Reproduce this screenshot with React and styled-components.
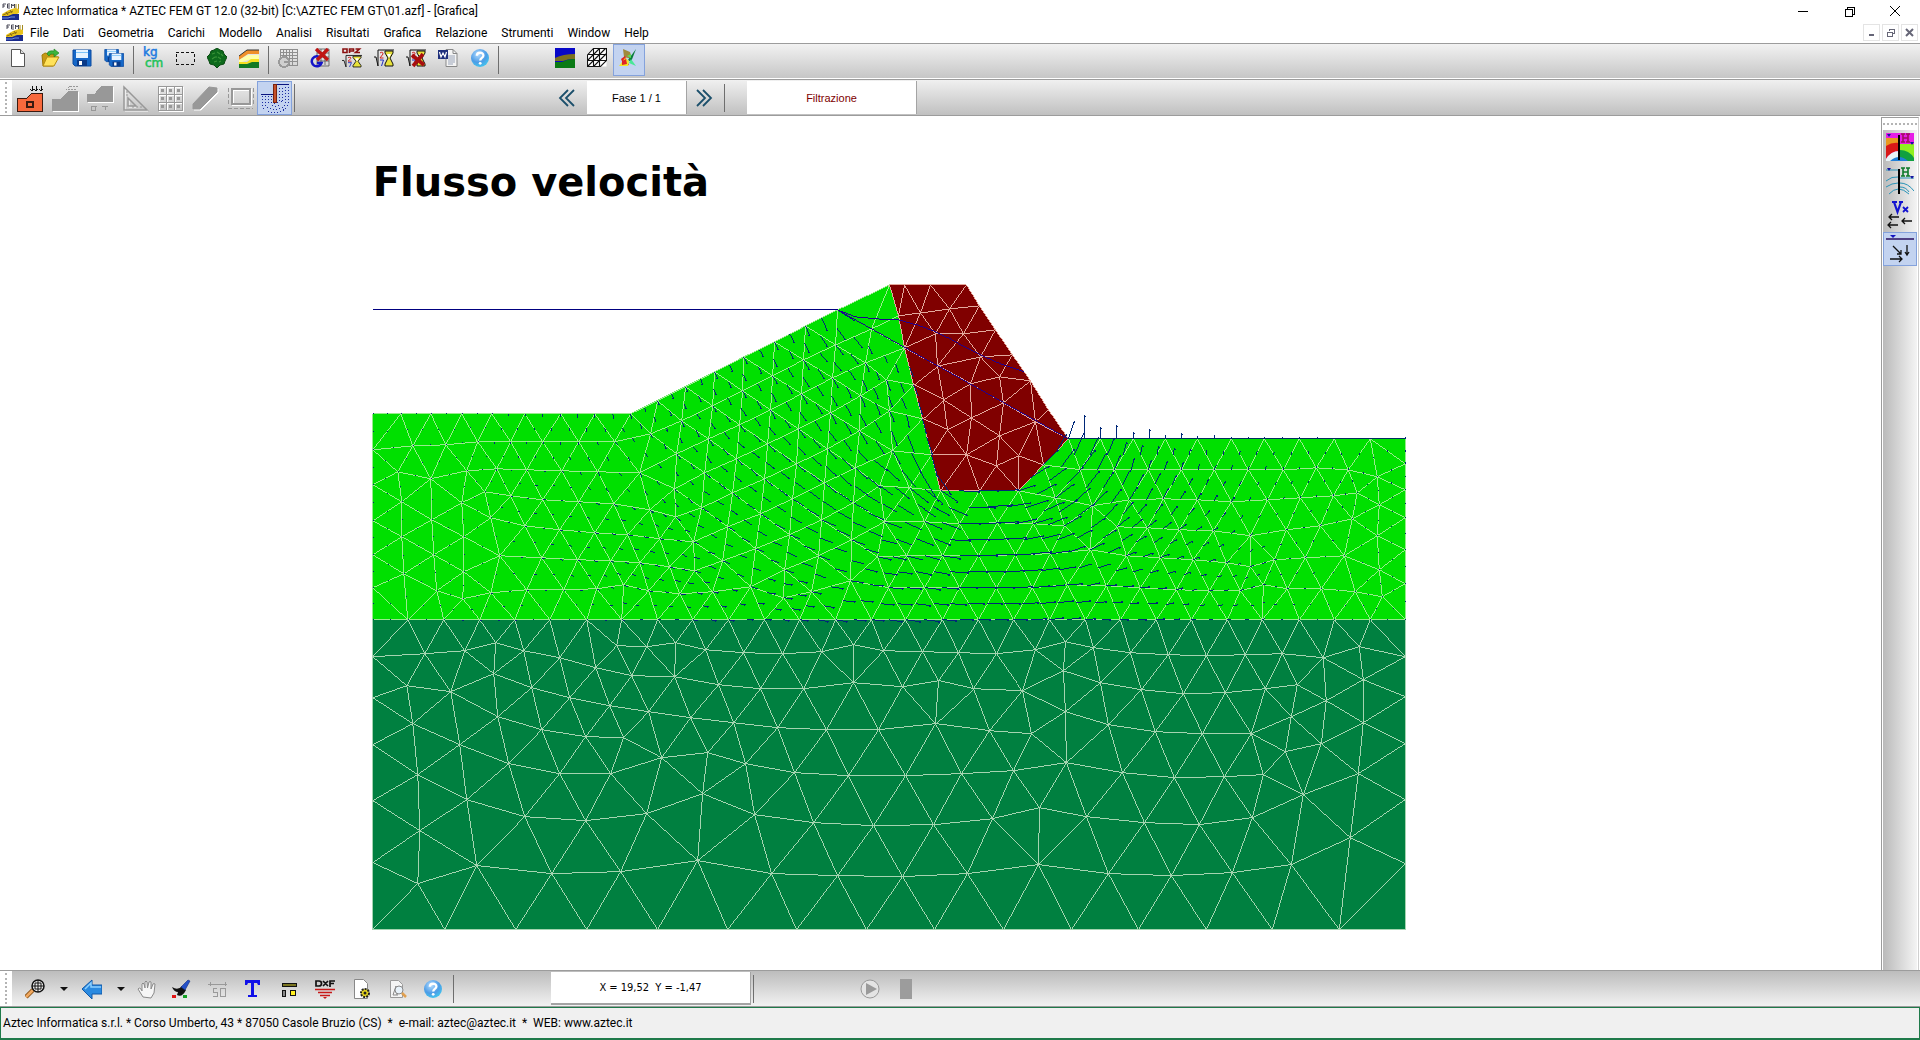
import React from "react";
import styled, { createGlobalStyle, css } from "styled-components";

/* ------------------------------------------------------------------ */
/* Page                                                                */
/* ------------------------------------------------------------------ */

const UI_FONT = 'Roboto, "Open Sans", sans-serif';

const GlobalStyle = createGlobalStyle`
  *, *::before, *::after { box-sizing: border-box; }
  html, body, #root { height: 100%; }
  body { margin: 0; background: #fff; font-family: ${UI_FONT}; font-size: 12px; color: #000; }
  button { font: inherit; color: inherit; }
`;

const Window = styled.div`
  height: 100vh;
  display: flex;
  flex-direction: column;
  background: #fff;
  overflow: hidden;
`;

const TitleBar = styled.header`
  height: 22px;
  flex: none;
  display: flex;
  align-items: center;
  gap: 4px;
  padding: 0 2px;
`;

const TitleText = styled.div`
  flex: 1;
  white-space: pre;
  font-size: 12px;
  line-height: 20px;
`;

const WindowControls = styled.div`
  display: flex;
  height: 20px;
`;

const WindowButton = styled.button`
  width: 46px;
  height: 20px;
  padding: 0;
  border: 0;
  background: none;
  display: grid;
  place-items: center;
`;

const MenuBar = styled.nav`
  height: 21px;
  flex: none;
  display: flex;
  align-items: center;
  padding: 0 2px 0 6px;
`;

const MenuList = styled.div`
  flex: 1;
  display: flex;
`;

const MenuItem = styled.button`
  border: 0;
  background: none;
  padding: 0 7px;
  line-height: 20px;
  font-size: 12px;
`;

const MdiControls = styled.div`
  display: flex;
  gap: 2px;
`;

const MdiButton = styled.button`
  width: 17px;
  height: 17px;
  padding: 0;
  border: 1px solid #e4e4e4;
  background: #fff;
  display: grid;
  place-items: center;
`;

const Tool = styled.button`
  width: ${(p) => p.$w || 32}px;
  height: ${(p) => p.$h || 32}px;
  flex: none;
  padding: 0;
  display: grid;
  place-items: center;
  background: ${(p) => (p.$on ? "#c3d3f0" : "none")};
  border: 1px solid ${(p) => (p.$on ? "#84a2dc" : "transparent")};
  svg { display: block; }
`;

const Bar = styled.div`
  flex: none;
  display: flex;
  align-items: center;
  border: solid #9c9c9c;
  border-width: 1px 0;
  ${(p) =>
    p.$kind === "main" &&
    css`
      height: 36px;
      border-bottom-color: #fff;
      padding: 0 0 2px 2px;
      background: linear-gradient(#f2f2f2, #c6c6c6);
      ${Tool} { padding-bottom: 4px; }
    `}
  ${(p) =>
    p.$kind === "phase" &&
    css`
      height: 37px;
      background: linear-gradient(#f0f0f0, #c0c0c0);
    `}
  ${(p) =>
    p.$kind === "bottom" &&
    css`
      height: 37px;
      background: linear-gradient(#bcbcbc, #f2f2f2);
    `}
`;

const Grip = styled.div`
  width: 12px;
  height: 100%;
  flex: none;
  background: #fff;
  display: flex;
  justify-content: center;
  padding: 2px 0;
  &::before {
    content: "";
    border-left: 2px dotted #b4b4b4;
  }
`;

const Group = styled.div`
  display: flex;
  align-items: center;
  height: 100%;
  ${(p) => p.$space && css`margin-left: ${p.$space}px;`}
`;

const Divider = styled.div`
  width: 1px;
  height: 28px;
  flex: none;
  margin: 0 ${(p) => p.$gap ?? 3}px;
  background: #6e6e6e;
`;

const Readout = styled.output`
  width: ${(p) => p.$w}px;
  height: 33px;
  flex: none;
  display: grid;
  place-items: center;
  background: #fff;
  border: solid #a4a4a4;
  border-width: 0 1px ${(p) => (p.$deep ? 2 : 0)}px 0;
  color: ${(p) => p.$color || "#000"};
  font: ${(p) => p.$font || '11px "Liberation Sans", sans-serif'};
  white-space: pre;
`;

const Client = styled.div`
  flex: 1;
  min-height: 0;
  display: flex;
`;

const Canvas = styled.main`
  flex: 1;
  min-width: 0;
  svg { display: block; width: 100%; height: 100%; }
`;

const SideBar = styled.aside`
  width: 38px;
  margin: 1px 1px 0 0;
  flex: none;
  border: 1px solid #9c9c9c;
  border-right-color: #d0d0d0;
  border-bottom: 0;
  padding: 0 1px;
  background: #fff;
  display: flex;
  flex-direction: column;
`;

const SideGrip = styled.div`
  height: 12px;
  flex: none;
  display: flex;
  flex-direction: column;
  justify-content: center;
  &::before {
    content: "";
    border-top: 2px dotted #b4b4b4;
  }
`;

const SideTools = styled.div`
  flex: 1;
  display: flex;
  flex-direction: column;
  background: linear-gradient(to right, #bababa, #f4f4f4);
`;

const StatusBar = styled.footer`
  height: 33px;
  flex: none;
  border: solid #1f7a4a;
  border-width: 1px 1px 2px;
  background: #f0f0f0;
  padding-left: 2px;
  white-space: pre;
  line-height: 31px;
  font-size: 12px;
`;

/* ------------------------------------------------------------------ */
/* Icons                                                               */
/* ------------------------------------------------------------------ */

const Icon = ({ s = 20, vb, crisp, children }) => (
  <svg
    width={s}
    height={s}
    viewBox={vb || "0 0 20 20"}
    fill="none"
    aria-hidden="true"
    shapeRendering={crisp ? "crispEdges" : "auto"}
  >
    {children}
  </svg>
);

const AppIcon = () => (
  <Icon s={17} vb="0 0 17 17">
    <path d="M1 5V1h3M1 3h2M8 1H5.500v4H8M5.500 3H8M9.500 5V1l1.500 2 1.500-2v4" stroke="#223" strokeWidth=".8" />
    <path d="M14 1v5l-2 1M16.500 1v5l-2 3" stroke="#a38a20" />
    <path d="M0 11l7-4 6-2 4 1v4l-8 4H0z" fill="#e8c21c" />
    <path d="M1 12l10-4M4 9l2 3M8 7l2 3" stroke="#8a6d10" />
    <path d="M0 13h6l5-2h6v6H0z" fill="#1a2a8c" />
    <path d="M0 15h6l3-1h4" stroke="#6f8fe0" />
  </Icon>
);

const Help = () => (
  <Icon>
    <defs>
      <radialGradient id="helpBall" cx="0.4" cy="0.3" r="0.8">
        <stop offset="0" stopColor="#b4dcff" />
        <stop offset="0.55" stopColor="#4d9ce6" />
        <stop offset="1" stopColor="#3fd0f0" />
      </radialGradient>
    </defs>
    <circle cx="10" cy="10" r="9" fill="url(#helpBall)" />
    <path d="M6.800 7.800c0-4 6.600-4 6.600-.4 0 2.400-3.200 2.500-3.200 5" stroke="#fff" strokeWidth="2.300" />
    <circle cx="10.200" cy="15.300" r="1.400" fill="#fff" />
  </Icon>
);

const Floppy = ({ x = 0, y = 0, k = 1 }) => (
  <g transform={`translate(${x} ${y}) scale(${k})`}>
    <path d="M1 2h18v16H3l-2-2z" fill="#1668c8" stroke="#0b4aa0" />
    <path d="M4 2h12v8H4z" fill="#e6f4ff" />
    <path d="M4 4h12v1H4z" fill="#7cc4f8" />
    <path d="M5 12h10v6H5z" fill="#0a3a88" />
    <path d="M7 13h3v4H7z" fill="#fff" />
  </g>
);

const Hourglass = ({ opz, cross }) => (
  <Icon>
    {opz && <path d="M1 1h4v3.500H1zM7.500 5V1h4v2h-4M13.500 1h4l-4 3.500h4.500" stroke="#8b1010" strokeWidth="1.600" />}
    <g transform={opz ? "translate(0 6) scale(1 .72)" : ""}>
      <path d="M0 9h2l2 9V2h16" stroke="#111" />
      <path d="M6 5q3-2 3 1l-3 4h3.500" stroke="#d02020" />
      <path d="M6 12h3.500l-2 6" stroke="#2030c0" />
      <path d="M11 3h8v2l-3 5 3 6v2h-8v-2l3-6-3-5z" fill="#e8e23a" stroke="#111" />
      <path d="M13 6h4l-2 4z" fill="#fff" />
    </g>
    {cross && <path d="M6 7l12 10M17 6L7 18" stroke="#a80e0e" strokeWidth="3.600" />}
  </Icon>
);

const mainIcons = {
  new: (
    <Icon>
      <path d="M3.500 1.500h9l4 4v13h-13z" fill="#fff" stroke="#555" />
      <path d="M12.500 1.500v4h4" fill="#ddd" stroke="#555" />
    </Icon>
  ),
  open: (
    <Icon>
      <path d="M2 7l3-2 4 1 6 0v3L18 9l-5 9H3z" fill="#c79a14" stroke="#a07a08" />
      <path d="M3 18L7 9h12l-5 9z" fill="#ffe25a" stroke="#b58c10" />
      <path d="M7 6q1-4 7-3V1l5 4-5 4V6q-4-1-5 2z" fill="#3cb43c" stroke="#18801c" strokeWidth=".6" />
    </Icon>
  ),
  save: (
    <Icon>
      <Floppy />
    </Icon>
  ),
  saveAll: (
    <Icon>
      <Floppy k={0.76} />
      <Floppy x={4.5} y={4} k={0.8} />
    </Icon>
  ),
  units: (
    <Icon s={24} vb="0 0 24 24">
      <g fontFamily='"DejaVu Sans", sans-serif' fontSize="12">
        <text x="2" y="10" fill="#1e7be0" stroke="#1e7be0" strokeWidth=".5">kg</text>
        <text x="4" y="21" fill="#1fc25a" stroke="#1fc25a" strokeWidth=".5">cm</text>
      </g>
    </Icon>
  ),
  select: (
    <Icon crisp>
      <path d="M1 4h18v12H1z" stroke="#111" strokeDasharray="3 2" />
    </Icon>
  ),
  tree: (
    <Icon>
      <path
        d="M10 0l3 2 3 1 1 3 3 3-2 4-1 3-4 1-3 3-3-3-4-1-1-3-2-4 3-3 1-3 3-1z"
        fill="#0d6a1c"
        stroke="#0a4a12"
      />
      <path d="M5 6l3-1M10 4l3 2M5 11l3-2M11 9l3 2M7 14l3-1M14 6l2 2M12 14l2-1M9 8v2" stroke="#3a9438" strokeWidth="1.100" />
    </Icon>
  ),
  strata: (
    <Icon>
      <path d="M0 8L8 2h12v4H9L0 12z" fill="#f0902a" />
      <path d="M0 8L8 2h12" stroke="#333" />
      <path d="M0 12l9-5h11v4H12L0 15z" fill="#ffffa8" />
      <path d="M0 14h8l4-3h8v4h-8l-5 1H0z" fill="#f4e020" />
      <path d="M0 16h8l5-2h7v6H0z" fill="#127a24" />
    </Icon>
  ),
  gridGlobe: (
    <Icon crisp>
      <path d="M2 1h17v16H2zM5 1v16M8 1v16M11 1v16M14 1v16M2 4h17M2 7h17M2 10h17M2 13h17" stroke="#8e8e8e" />
      <circle cx="6" cy="14" r="5" fill="#d0d0d0" stroke="#9a9a9a" strokeWidth="2" />
      <path d="M6 14h5" stroke="#9a9a9a" strokeWidth="2" />
    </Icon>
  ),
  gridDelete: (
    <Icon>
      <path d="M7 1h12v17H7zM11 1v16M15 1v16M7 5h12M7 9h12M7 13h12" stroke="#444" strokeWidth=".7" />
      <path d="M10.500 10a5 5 0 1 0 1 5H7" stroke="#1414c8" strokeWidth="2.500" />
      <path d="M6 1l12 11M18 1L7 12" stroke="#c01414" strokeWidth="3.400" />
    </Icon>
  ),
  opz: <Hourglass opz />,
  run: <Hourglass />,
  stop: <Hourglass cross />,
  word: (
    <Icon>
      <path d="M8 1.500h7l4 4v13H8z" fill="#f4f4f4" stroke="#888" />
      <path d="M10 8h7M10 10h7M10 12h7M10 14h7M10 16h5" stroke="#9aa4b8" />
      <path d="M15 1.500v4h4" stroke="#888" />
      <path d="M0 2h10v9H0z" fill="#20307c" />
      <path d="M1.500 4l1.500 5 2-4 2 4 1.500-5" stroke="#fff" strokeWidth="1.200" />
    </Icon>
  ),
  help: <Help />,
  materials: (
    <Icon>
      <path d="M0 0h20v20H0z" fill="#0808c8" />
      <path d="M0 10q8-4 20-4v5q-8 0-12 2H0z" fill="#7c7020" />
      <path d="M0 14h7q5-3 13-3v9H0z" fill="#0a7a14" />
    </Icon>
  ),
  mesh: (
    <Icon>
      <path d="M.5 7L6.500.5h13v18H.5z" fill="#fff" />
      <path
        d="M.5 18.500V7L6.500.5h13v12l-6 6zM.5 6.500h19M.5 12.500h19M6.500.5v18M12.500.5v18M.5 12.500l12-12M.5 18.500l18-18M6.500 18.500l13-13"
        stroke="#111"
        strokeWidth="1.100"
      />
    </Icon>
  ),
  view: (
    <Icon>
      <path d="M4 1l7 3 2 7-8-2z" fill="#a08a3c" />
      <path d="M2 11l4-3 4 9-5 1z" fill="#e02424" />
      <path d="M17 1L9 12l3 2z" fill="#0c7c3c" />
      <path d="M0 18l6-8 4 3-1 5z" fill="#f0e828" />
      <path d="M3 13l4-2 1 5-5 1z" fill="#e02424" />
      <path d="M12 11l5 7-7-3z" fill="#48e898" />
      <path d="M8 8l4-2v4z" fill="#58e058" />
    </Icon>
  ),
};

const Emboss = ({ children }) => (
  <>
    <g transform="translate(1 1)" stroke="#fff" fill="#fff">{children}</g>
    <g stroke="#989898" fill="#989898">{children}</g>
  </>
);

const phaseIcons = {
  domain: (
    <Icon s={28} vb="0 0 28 28" crisp>
      <path d="M1 14h10l5-5h10v18H1z" fill="#f8693c" stroke="#3a1a10" />
      <path d="M11 18h6v5h-6z" stroke="#3a1a10" strokeWidth="1.500" />
      <path d="M16 2v5M20 2v5M25 2v5M14 5l2 2 2-2M18 5l2 2 2-2M23 5l2 2 2-2" stroke="#111" />
    </Icon>
  ),
  slope: (
    <Icon s={28} vb="0 0 28 28" crisp>
      <Emboss>
        <path d="M1 15h9l8-8h8v19H1z" />
      </Emboss>
      <path d="M15 6l4-4h8M17 5h9" stroke="#989898" strokeDasharray="2 1" />
    </Icon>
  ),
  springs: (
    <Icon s={28} vb="0 0 28 28" crisp>
      <Emboss>
        <path d="M1 10h8l7-8h10v15H1z" />
      </Emboss>
      <path d="M5 22h4v4H5zM6 22h5M16 22h6M19 22v4" stroke="#989898" />
    </Icon>
  ),
  square: (
    <Icon s={28} vb="0 0 28 28">
      <path d="M3 3v23h23zM7 14v8h8z" stroke="#fff" transform="translate(1 1)" />
      <path d="M3 3v23h23zM7 14v8h8z" stroke="#989898" strokeWidth="1.500" />
      <path d="M5 8h2M5 11h2M12 24v-2M16 24v-2M20 24v-2" stroke="#989898" />
    </Icon>
  ),
  grid: (
    <Icon s={28} vb="0 0 28 28" crisp>
      <path d="M2 2h24v24H2zM10 2v24M18 2v24M2 10h24M2 18h24" stroke="#fff" transform="translate(1 1)" />
      <path d="M2 2h24v24H2zM10 2v24M18 2v24M2 10h24M2 18h24" stroke="#989898" />
      <path d="M5 5h3v3H5zM13 5h3v3h-3zM21 5h3v3h-3zM5 13h3v3H5zM13 13h3v3h-3zM21 13h3v3h-3zM5 21h3v3H5zM13 21h3v3h-3zM21 21h3v3h-3z" fill="#989898" />
    </Icon>
  ),
  beam: (
    <Icon s={28} vb="0 0 28 28">
      <Emboss>
        <path d="M2 20L18 3l8 1v4L9 25H2z" />
      </Emboss>
    </Icon>
  ),
  frame: (
    <Icon s={28} vb="0 0 28 28" crisp>
      <path d="M6 5h18v15H6z" stroke="#fff" strokeWidth="2" transform="translate(1 1)" />
      <path d="M6 5h18v15H6z" stroke="#989898" strokeWidth="2" />
      <path d="M2 4v18M27 4v18M2 24h25" stroke="#989898" strokeDasharray="4 2" />
    </Icon>
  ),
  seepage: (
    <Icon s={30} vb="0 0 30 30" crisp>
      <path d="M1 11h12M17 1h12" stroke="#0a1480" />
      <path
        d="M2 13v8q1 6 8 8h8q9-2 10-8V3M5 13v7q1 5 6 6h7q6-1 7-6V3M8 13v6q1 4 5 4h4q5-1 5-5V3M11 13v5q1 2 4 3 3-1 4-3V4"
        stroke="#1c2ca0"
        strokeDasharray="1 2"
      />
      <path d="M13 1h3v18h-3z" fill="#c4502c" stroke="#7a2410" />
    </Icon>
  ),
};

const Chevrons = ({ right }) => (
  <Icon s={18} vb="0 0 18 18">
    <g stroke="#1b4f6b" strokeWidth="1.800" transform={right ? "translate(18 0) scale(-1 1)" : ""}>
      <path d="M10 1L2 9l8 8M16 1L8 9l8 8" />
    </g>
  </Icon>
);

const Caret = () => (
  <Icon s={8} vb="0 0 8 8">
    <path d="M0 2h8L4 6z" fill="#111" />
  </Icon>
);

const bottomIcons = {
  zoom: (
    <Icon>
      <path d="M1 18l7-7" stroke="#8a5418" strokeWidth="4.500" />
      <path d="M1 18l7-7" stroke="#f0a860" strokeWidth="2.500" />
      <circle cx="13" cy="7" r="6" fill="#eee" stroke="#111" strokeWidth="1.500" />
      <path d="M13 1v12M7 7h12M10 4h6v6h-6z" stroke="#111" />
    </Icon>
  ),
  back: (
    <Icon>
      <path d="M0 10L10 1v5h10v9H10v5z" fill="#2a8ae0" stroke="#1058a8" />
      <path d="M3 10l6-6v4h10" stroke="#8cd0ff" strokeWidth="1.500" />
    </Icon>
  ),
  hand: (
    <Icon>
      <path
        d="M6 18l-5-8q1-2 3 0l1 2V5q1-2 2 0l1 4V3q1-2 2 0l.5 6L12 3q1-1 2 0v7l2-5q1-1 2 0l-1 9-3 5z"
        fill="#f6f6f6"
        stroke="#8a8a8a"
      />
    </Icon>
  ),
  brush: (
    <Icon>
      <path d="M1 8q6 4 10-1l4 4q-4 8-9 5l1-3q-4 0-6-5z" fill="#111" />
      <path d="M10 8l7-7 2 1-5 9z" fill="#2450c8" stroke="#102c80" strokeWidth=".6" />
      <path d="M1 16h4v3H1z" fill="#e01414" />
      <path d="M12 16h4v3h-4z" fill="#14a024" />
    </Icon>
  ),
  dimension: (
    <Icon crisp>
      <path d="M1 5h19M3 3v4M18 3v4" stroke="#999" />
      <path d="M10 9H6v4h4v4H6M13 9h5v8h-5z" stroke="#999" />
    </Icon>
  ),
  text: (
    <Icon>
      <path d="M2 1h15v5h-2l-1-2h-3v12h3v2H5v-2h3V4H5L4 6H2z" fill="#1010e8" />
    </Icon>
  ),
  legend: (
    <Icon crisp>
      <path d="M3 4h14v3H3z" fill="#7a7420" stroke="#111" />
      <path d="M3 11h3v6H3z" fill="#888" stroke="#111" />
      <path d="M11 11h5v5h-5z" fill="#ffee20" stroke="#111" />
    </Icon>
  ),
  dxf: (
    <Icon>
      <path d="M1 2h3q2.500 0 2.500 2.500T4 7H1zM8 2l5 5M13 2L8 7M15 8V2h5M15 4.500h4" stroke="#111" strokeWidth="1.700" />
      <path d="M0 10.500h20M3 13.500h14M5 16.500h10" stroke="#c81818" strokeWidth="1.600" />
      <path d="M8 18h4l-2 2z" fill="#c81818" />
    </Icon>
  ),
  pageSetup: (
    <Icon>
      <path d="M3.500 .5h9l4 4v15h-13z" fill="#fff" stroke="#888" />
      <circle cx="14" cy="14" r="4" fill="#e8d820" stroke="#222" strokeDasharray="2 1" strokeWidth="2" />
      <circle cx="14" cy="14" r="1.500" fill="#222" />
    </Icon>
  ),
  preview: (
    <Icon>
      <path d="M3.500 1.500h8l4 4v13h-12z" fill="#f4f4f4" stroke="#9a9a9a" />
      <path d="M6 16l3-9 1 9M6 16h5" stroke="#888" />
      <circle cx="12" cy="11" r="4" fill="#e8f2fa" stroke="#888" />
      <path d="M15 14l4 4" stroke="#e0a050" strokeWidth="2.500" />
    </Icon>
  ),
  help: <Help />,
};

const sideIcons = {
  head: (
    <Icon s={28} vb="0 0 28 28">
      <path d="M0 0h28v28H0z" fill="#e61ee6" />
      <path d="M0 5h13v9H0z" fill="#e89a20" />
      <path d="M0 13q6-4 13-3v8q-8 0-13 8z" fill="#d81818" />
      <path d="M0 26q5-8 13-8v10H0z" fill="#e8f4f8" />
      <path d="M14 11h14v17H14z" fill="#90f020" />
      <path d="M14 17q9 0 14 8v3H14z" fill="#10a040" />
      <path d="M4 28q9-8 18 0z" fill="#2080d8" />
      <path d="M13 2v25" stroke="#000" strokeWidth="2" />
      <path d="M15 1h4M15 9h4M17 1v8M17 5h5M20 1h4M20 9h4M22 1v8" stroke="#a01060" strokeWidth="1.600" />
      <path d="M1 1h4L3 4zM24 9h4l-2 3z" fill="#1414a0" />
    </Icon>
  ),
  headLines: (
    <Icon s={28} vb="0 0 28 28">
      <path d="M0 3h12M14 11h14M0 14q6-5 12-4M0 20q6-4 12-4M14 16q8 0 14 8M3 27q9-10 20 0M14 20q6 0 9 5" stroke="#2a94b8" />
      <path d="M13 2v25" stroke="#000" strokeWidth="2" />
      <path d="M15 1h4M15 9h4M17 1v8M17 5h5M20 1h4M20 9h4M22 1v8" stroke="#0c7a28" strokeWidth="1.600" />
      <path d="M1 1h4L3 4zM24 9h4l-2 3z" fill="#1414a0" />
    </Icon>
  ),
  velocityX: (
    <Icon s={28} vb="0 0 28 28">
      <path d="M6 1h5M13 1h4M8 1l3.500 10L15 1" stroke="#1414d0" strokeWidth="2.200" />
      <path d="M17 6l5 5M22 6l-5 5" stroke="#1414d0" strokeWidth="1.800" />
      <path d="M3 16h10M2 24h10M16 20h10M6 13l-3 3 3 3M5 21l-3 3 3 3M19 17l-3 3 3 3" stroke="#111" strokeWidth="1.300" />
    </Icon>
  ),
  velocityFlow: (
    <Icon s={28} vb="0 0 28 28">
      <path d="M0 4h28" stroke="#2a1060" strokeWidth="1.500" />
      <path d="M4 0h6L7 3z" fill="#1414c0" />
      <path d="M7 11l8 8M15 15v4h-4M21 10v10M19 17l2 3 2-3M4 24h12M13 21l3 3-3 3" stroke="#111" strokeWidth="1.300" />
    </Icon>
  ),
};

/* ------------------------------------------------------------------ */
/* Finite element model                                                */
/* ------------------------------------------------------------------ */

const SX = 2.956;
const SY = 3;
const toPx = ([x, y]) => [359 + x / SX, 153 + y / SY];
const shift = (dx, dy, list) => list.map(([x, y]) => [x + dx, y + dy]);
const EAST = 1538;
const DEEP = 1020;

const damOutline = shift(EAST, 0, [
  [32, 47], [259, 47], [298, 112], [344, 182], [394, 257], [447, 337], [503, 424], [562, 511],
  [486, 587], [413, 665], [298, 667], [181, 665], [155, 558], [128, 450], [104, 347], [76, 238], [57, 142],
]);

const sandOutline = [
  [40, 436], [804, 436], [1416, 124], [1570, 47],
  ...shift(EAST, 0, [[57, 142], [76, 238], [104, 347], [128, 450], [155, 558], [181, 665], [298, 667], [413, 665], [486, 587], [562, 511], [1556, 511], [1556, 1054]]),
  [40, 1054],
];

const clayOutline = [[40, 1054], [3094, 1054], [3094, 1984], [40, 1984]];

const interfaceNodes = [
  [40, 1054], [146, 1054], [251, 1054], [358, 1054], [462, 1054], [566, 1054], [675, 1054], [777, 1054], [884, 1054],
  [987, 1054], [1093, 1054], [1201, 1054], [1304, 1054], [1410, 1054], [1516, 1054],
  ...shift(EAST, 0, [
    [80, 1054], [187, 1054], [294, 1054], [398, 1054], [504, 1054], [610, 1054], [714, 1054], [822, 1054], [924, 1054],
    [1031, 1054], [1135, 1054], [1243, 1054], [1348, 1054], [1453, 1054], [1556, 1054],
  ]),
];

const sandNodes = [
  [40, 436], [40, 542], [40, 649], [40, 755], [40, 858], [40, 958],
  [125, 436], [212, 436], [304, 436], [394, 436], [492, 436], [597, 436], [697, 436], [804, 436],
  [884, 395], [966, 353], [1053, 309], [1139, 265], [1230, 219], [1321, 172], [1416, 124], [1570, 47],
  [161, 531], [258, 527], [352, 519], [449, 519], [545, 519], [649, 519], [758, 519], [864, 494], [955, 457],
  [1046, 410], [1134, 366], [1223, 321], [1316, 273], [1410, 229], [1517, 181],
  [116, 610], [214, 631], [318, 607], [407, 601], [497, 603], [599, 607], [706, 610], [830, 611], [940, 556],
  [1035, 511], [1125, 469], [1217, 424], [1309, 376], [1400, 326], [1498, 282], [1562, 334],
  [126, 700], [217, 752], [304, 703], [373, 669], [448, 681], [545, 692], [649, 698], [755, 706], [859, 722],
  [934, 660], [1024, 613], [1116, 571], [1208, 526], [1301, 480], [1394, 433], [1484, 381],
  [128, 805], [221, 858], [309, 804], [391, 748], [491, 771], [594, 782], [698, 791], [796, 799], [937, 745],
  [1014, 716], [1105, 673], [1199, 631], [1294, 585], [1386, 540], [1480, 487],
  [134, 915], [310, 909], [417, 861], [541, 867], [647, 874], [744, 877], [831, 883], [889, 810], [989, 818],
  [1092, 774], [1187, 734], [1282, 690], [1377, 642], [1468, 596], [1540, 652],
  [230, 965], [306, 990], [391, 972], [496, 964], [605, 964], [704, 961], [784, 949], [858, 966], [918, 894],
  [994, 907], [1077, 877], [1174, 840], [1274, 797], [1369, 752], [1462, 703],
  [950, 974], [1046, 969], [1158, 955], [1259, 903], [1359, 862], [1458, 813], [1256, 986], [1338, 968],
  [1454, 937], [1535, 865],
  ...interfaceNodes,
  ...shift(EAST, 0, [
    [57, 142], [76, 238], [104, 347], [128, 450], [155, 558], [181, 665], [298, 667], [413, 665], [486, 587],
    [562, 511], [656, 511], [752, 511], [848, 511], [943, 511], [1042, 511], [1141, 511], [1244, 511], [1347, 511],
    [1452, 511], [1556, 511], [1556, 586], [1556, 663], [1556, 748], [1556, 844], [1556, 946],
    [33, 425], [41, 547], [92, 658], [18, 760], [135, 760], [239, 766], [350, 763], [457, 766], [523, 686],
    [548, 772], [632, 711], [595, 602],
    [697, 603], [797, 602], [895, 603], [993, 603], [1093, 602], [1195, 602], [1294, 598], [1389, 602], [1474, 625],
    [741, 694], [841, 690], [943, 692], [1042, 698], [1148, 694], [1247, 687], [1343, 680], [1414, 673], [1480, 709],
    [706, 774], [793, 778], [889, 783], [989, 787], [1098, 801], [1206, 783], [1307, 771], [1400, 751], [1475, 802],
    [83, 860], [187, 860], [294, 860], [403, 858], [508, 854], [625, 842], [733, 860], [834, 866], [931, 874],
    [1027, 883], [1100, 894], [1170, 874], [1261, 866], [1378, 861], [1480, 903],
    [30, 957], [135, 958], [239, 958], [348, 957], [454, 956], [559, 949], [673, 950], [774, 957], [879, 963],
    [978, 966], [1068, 966], [1137, 949], [1207, 961], [1309, 961], [1410, 969], [1488, 984],
  ]),
];

const damNodes = [
  ...damOutline,
  ...shift(EAST, 0, [
    [76, 47], [153, 47], [122, 133], [209, 121], [167, 195], [250, 195], [174, 292], [301, 265], [192, 393],
    [271, 344], [358, 323], [369, 402], [464, 459], [202, 483], [273, 448], [356, 502], [259, 559], [347, 590],
    [413, 561],
  ]),
];

const clayNodes = [
  ...interfaceNodes,
  ...shift(0, DEEP, [
    [40, 144], [40, 266], [40, 408], [40, 576], [40, 763], [40, 964],
    [253, 964], [463, 964], [673, 964], [884, 964], [1091, 964], [1295, 964], [1501, 964],
    [195, 136], [312, 127], [404, 103], [489, 127], [593, 148], [700, 178], [764, 112], [850, 115], [936, 102],
    [1025, 124], [1137, 132], [1252, 136], [1368, 130], [1462, 109], [1553, 127],
    [141, 230], [273, 250], [398, 196], [510, 238], [625, 268], [741, 290], [808, 202], [934, 203], [1063, 229],
    [1188, 240], [1315, 240], [1462, 223],
    [161, 344], [298, 409], [410, 323], [540, 364], [671, 385], [783, 388], [857, 310], [981, 328], [1108, 343],
    [1239, 358], [1383, 364], [1537, 362],
    [173, 497], [320, 574], [443, 465], [594, 495], [744, 495], [895, 447], [1031, 431], [1143, 465], [1289, 493],
    [1449, 502],
    [181, 667], [350, 772], [490, 625], [671, 637], [850, 616], [1017, 555], [1170, 619], [1344, 643], [1522, 651],
    [173, 826], [570, 794], [774, 790], [1002, 757], [1220, 794], [1416, 802],
  ]),
  ...shift(EAST, DEEP, [
    [165, 964], [368, 964], [570, 964], [768, 964], [968, 964], [1164, 964], [1362, 964], [1556, 964],
    [129, 129], [236, 132], [347, 136], [463, 124], [551, 100], [636, 118], [744, 133], [855, 139], [969, 142],
    [1084, 139], [1193, 135], [1315, 148], [1421, 115], [1556, 143],
    [70, 235], [176, 217], [279, 240], [425, 247], [545, 186], [655, 222], [776, 244], [900, 254], [1026, 253],
    [1143, 240], [1237, 228], [1323, 277], [1433, 213], [1556, 265],
    [167, 346], [327, 367], [452, 376], [551, 308], [680, 348], [818, 370], [957, 376], [1102, 376], [1220, 325],
    [1203, 429], [1309, 404], [1433, 343], [1556, 406],
    [78, 501], [243, 496], [398, 487], [555, 463], [719, 493], [874, 508], [1021, 505], [1137, 499], [1255, 559],
    [1418, 495], [1556, 574],
    [162, 647], [336, 631], [475, 597], [614, 625], [786, 642], [949, 648], [1106, 628], [1395, 687], [1556, 764],
    [70, 805], [261, 796], [472, 769], [680, 794], [866, 802], [1046, 793], [1220, 767],
  ]),
];

// Known seepage velocities: x, y, vx, vy
const velocityWest = [
  [40, 500, 0, 3], [300, 436, 0, 3], [300, 800, 3, 1], [100, 900, 1, 1], [450, 519, 0, 5], [545, 692, 7, 2],
  [597, 436, 0, 8], [697, 436, 0, 12], [804, 436, 3, 14], [884, 395, 6, 14], [966, 353, 8, 16], [1053, 311, 9, 20],
  [1139, 266, 11, 21], [1230, 219, 12, 24], [1321, 173, 12, 30], [1370, 148, 18, 38], [1416, 124, 50, 32],
  [1410, 175, 28, 36], [1410, 229, 24, 28], [1400, 326, 20, 30], [1480, 376, 14, 34], [1209, 424, 16, 26],
  [1035, 511, 15, 20], [1301, 480, 20, 26], [1394, 433, 18, 32], [1116, 571, 20, 17], [1208, 526, 24, 22],
  [1294, 585, 28, 24], [1386, 540, 26, 30], [1480, 487, 24, 38], [940, 556, 12, 14], [864, 494, 4, 14],
  [758, 519, 8, 10], [830, 611, 8, 12], [934, 660, 8, 12], [859, 722, 12, 10], [1014, 716, 20, 14],
  [1105, 673, 22, 16], [1199, 631, 26, 20], [1282, 690, 32, 22], [1377, 642, 36, 30], [1468, 596, 38, 34],
  [1462, 703, 42, 24], [1369, 752, 40, 20], [1274, 797, 30, 13], [1187, 734, 26, 15], [1092, 774, 20, 12],
  [989, 818, 16, 8], [889, 810, 14, 4], [796, 799, 13, 3], [744, 877, 10, 5], [994, 907, 17, 6],
  [1077, 877, 20, 8], [1174, 840, 23, 10], [1359, 862, 32, 11], [1458, 813, 38, 14], [1535, 865, 40, 9],
  [1454, 937, 38, 6], [1256, 986, 26, 3], [1046, 969, 18, 3], [1200, 1054, 20, 0], [900, 1054, 10, 0],
  [600, 1054, 4, 0], [1480, 1000, 38, 2],
];
const velocityEast = [
  [20, 260, 8, 22], [60, 340, 12, 32], [82, 440, 10, 38], [32, 424, 14, 34], [40, 547, 22, 38], [82, 500, 20, 54],
  [128, 450, 12, 44], [155, 558, 18, 66], [124, 604, 54, 90], [181, 665, 56, 38], [92, 658, 56, 44],
  [5, 652, 38, 26], [0, 595, 40, 36], [18, 760, 48, 18], [135, 760, 52, 24], [187, 720, 54, 28], [240, 667, 60, 2],
  [298, 668, 60, 0], [356, 668, 60, -4], [413, 665, 52, -18], [450, 625, 54, -34], [486, 587, 46, -44],
  [270, 716, 80, 0], [350, 716, 76, -10], [430, 716, 70, -24], [239, 766, 64, 0], [350, 763, 66, -4],
  [457, 766, 58, -18], [294, 860, 60, 0], [403, 858, 60, -2], [508, 854, 58, -9], [523, 686, 56, -42],
  [562, 511, 16, -54], [580, 555, 30, -68], [609, 511, 0, -74], [656, 511, 0, -36], [595, 602, 46, -60],
  [650, 560, 24, -52], [704, 511, 0, -44], [752, 511, 0, -22], [800, 511, 0, -30], [848, 511, 0, -14],
  [895, 511, 0, -20], [943, 511, 0, -10], [993, 511, 0, -12], [1042, 511, 0, -8], [1141, 511, 0, -6],
  [1244, 511, 0, -8], [1400, 511, 0, -5], [697, 603, 18, -44], [750, 603, 10, -34], [797, 602, 8, -28],
  [895, 603, 6, -24], [993, 603, 4, -14], [1100, 600, 3, -12], [1300, 600, 0, -6], [632, 711, 44, -46],
  [690, 650, 28, -48], [741, 694, 24, -40], [790, 640, 14, -34], [841, 690, 16, -32], [943, 692, 12, -20],
  [1042, 698, 8, -14], [1148, 694, 5, -8], [548, 772, 50, -30], [625, 842, 42, -20], [706, 774, 34, -30],
  [793, 778, 27, -25], [889, 783, 20, -18], [989, 787, 15, -12], [1098, 801, 9, -8], [1206, 783, 5, -4],
  [625, 900, 40, -10], [733, 860, 30, -12], [834, 866, 24, -10], [931, 874, 19, -9], [1100, 894, 10, -6],
  [1261, 866, 5, -4], [1480, 800, 2, -2], [559, 949, 46, -4], [30, 957, 44, 3], [294, 957, 56, 0],
  [673, 950, 34, -3], [774, 957, 28, -3], [978, 966, 14, -2], [1200, 961, 6, -2], [1400, 960, 3, -1],
  [300, 1054, 40, 0], [700, 1054, 26, 0], [1000, 1054, 13, 0], [1300, 1054, 4, 0],
];
const velocities = [...velocityWest, ...velocityEast.map(([x, y, u, v]) => [x + EAST, y, u, v])];

const phreaticLine = [
  [1416, 124], [1470, 145], [1568, 154], ...shift(EAST, 0, [[58, 154], [110, 167], [160, 185], [215, 212], [300, 258], [360, 285], [430, 310]]),
];

function inside([x, y], poly) {
  let hit = false;
  for (let i = 0, j = poly.length - 1; i < poly.length; j = i++) {
    const [xi, yi] = poly[i];
    const [xj, yj] = poly[j];
    if (yi > y !== yj > y && x < ((xj - xi) * (y - yi)) / (yj - yi) + xi) hit = !hit;
  }
  return hit;
}

function circumcircle(a, b, c) {
  const d = 2 * (a[0] * (b[1] - c[1]) + b[0] * (c[1] - a[1]) + c[0] * (a[1] - b[1]));
  if (Math.abs(d) < 1e-9) return null;
  const a2 = a[0] ** 2 + a[1] ** 2;
  const b2 = b[0] ** 2 + b[1] ** 2;
  const c2 = c[0] ** 2 + c[1] ** 2;
  const x = (a2 * (b[1] - c[1]) + b2 * (c[1] - a[1]) + c2 * (a[1] - b[1])) / d;
  const y = (a2 * (c[0] - b[0]) + b2 * (a[0] - c[0]) + c2 * (b[0] - a[0])) / d;
  return { x, y, r2: (a[0] - x) ** 2 + (a[1] - y) ** 2 };
}

// Bowyer-Watson triangulation clipped to the outline; returns unique edges.
function meshEdges(nodes, outline) {
  const pts = nodes.map(toPx);
  const poly = outline.map(toPx);
  const n = pts.length;
  pts.push([-60000, -40000], [60000, -40000], [700, 80000]);
  let tris = [{ v: [n, n + 1, n + 2], c: circumcircle(pts[n], pts[n + 1], pts[n + 2]) }];
  for (let i = 0; i < n; i++) {
    const [px, py] = pts[i];
    const border = new Map();
    const keep = [];
    tris.forEach((t) => {
      if ((px - t.c.x) ** 2 + (py - t.c.y) ** 2 < t.c.r2 - 1e-7) {
        [[0, 1], [1, 2], [2, 0]].forEach(([p, q]) => {
          const e = [t.v[p], t.v[q]].sort((s, u) => s - u);
          const key = e.join("-");
          border.set(key, border.has(key) ? null : e);
        });
      } else keep.push(t);
    });
    border.forEach((e) => {
      if (!e) return;
      const c = circumcircle(pts[e[0]], pts[e[1]], pts[i]);
      if (c) keep.push({ v: [e[0], e[1], i], c });
    });
    tris = keep;
  }
  const edges = new Map();
  tris.forEach(({ v }) => {
    if (v.some((k) => k >= n)) return;
    const [a, b, c] = v.map((k) => pts[k]);
    const area = Math.abs((b[0] - a[0]) * (c[1] - a[1]) - (c[0] - a[0]) * (b[1] - a[1])) / 2;
    const centre = [(a[0] + b[0] + c[0]) / 3, (a[1] + b[1] + c[1]) / 3];
    if (area < 30 || !inside(centre, poly)) return;
    [[0, 1], [1, 2], [2, 0]].forEach(([p, q]) => {
      const e = [v[p], v[q]].sort((s, u) => s - u);
      edges.set(e.join("-"), [pts[e[0]], pts[e[1]]]);
    });
  });
  return [...edges.values()];
}

const velocityPx = velocities.map(([x, y, u, v]) => [...toPx([x, y]), u / SX, v / SY]);

function velocityAt([x, y]) {
  let w = 0;
  let u = 0;
  let v = 0;
  velocityPx.forEach(([sx, sy, su, sv]) => {
    const k = 1 / ((sx - x) ** 2 + (sy - y) ** 2 + 4) ** 2;
    w += k;
    u += su * k;
    v += sv * k;
  });
  return [u / w, v / w];
}

const r = Math.round;
const edgePath = (edges) => edges.map(([a, b]) => `M${r(a[0])} ${r(a[1])}L${r(b[0])} ${r(b[1])}`).join("");
const polyPath = (list, close = true) =>
  `M${list.map(toPx).map(([x, y]) => `${r(x)} ${r(y)}`).join("L")}${close ? "Z" : ""}`;

function flowPath(edges) {
  const points = new Map();
  const add = (p) => points.set(`${r(p[0])},${r(p[1])}`, p);
  edges.forEach(([a, b]) => {
    add(a);
    add(b);
    add([(a[0] + b[0]) / 2, (a[1] + b[1]) / 2]);
  });
  const start = toPx([1416, 124]);
  const end = toPx([2100, 511]);
  let d = "";
  points.forEach(([x, y]) => {
    const limit = start[1] + ((x - start[0]) * (end[1] - start[1])) / (end[0] - start[0]);
    if (x > start[0] + 2 && y < limit + 4 && x < end[0] - 4) return;
    const [u, v] = velocityAt([x, y]);
    const len = Math.hypot(u, v);
    if (len < 1.6) {
      d += `M${r(x)} ${r(y)}h1`;
      return;
    }
    const tx = r(x + u);
    const ty = r(y + v);
    d += `M${r(x)} ${r(y)}L${tx} ${ty}`;
    if (len > 5) {
      const ux = u / len;
      const uy = v / len;
      d += `M${r(tx - 2 * ux - uy)} ${r(ty - 2 * uy + ux)}L${tx} ${ty}`;
    }
  });
  return d;
}

const sandEdges = meshEdges(sandNodes, sandOutline);
const damEdges = meshEdges(damNodes, damOutline);
const clayEdges = meshEdges(clayNodes, clayOutline);

const Layer = styled.path`
  fill: ${(p) => p.$fill || "none"};
  stroke: ${(p) => p.$stroke || "none"};
  stroke-width: 1;
  shape-rendering: crispEdges;
`;

const PlotTitle = styled.text`
  font: bold 40px "DejaVu Sans", Verdana, sans-serif;
  fill: #000;
`;

const Plot = () => (
  <svg viewBox="0 0 1882 854" preserveAspectRatio="xMinYMin meet" role="img" aria-label="Flusso velocità">
    <PlotTitle x="373" y="80">Flusso velocità</PlotTitle>
    <Layer d={polyPath(clayOutline)} $fill="#008040" $stroke="#b8c8bc" />
    <Layer d={polyPath(sandOutline)} $fill="#00e000" $stroke="#6ce86c" />
    <Layer d={polyPath(damOutline)} $fill="#800000" $stroke="#700808" />
    <Layer d={edgePath(clayEdges)} $stroke="#a4d4b0" />
    <Layer d={edgePath(sandEdges)} $stroke="#98ec8c" />
    <Layer d={edgePath(damEdges)} $stroke="#e4a89c" />
    <Layer d={flowPath(sandEdges)} $stroke="#002878" />
    <Layer d={polyPath(phreaticLine, false)} $stroke="#200090" />
    <Layer d={polyPath([[1416, 124], [2100, 511]], false)} $stroke="#200090" />
    <Layer d={polyPath([[40, 124], [1416, 124]], false)} $stroke="#000080" />
    <Layer d={polyPath([[2100, 511], [3094, 511]], false)} $stroke="#003060" />
  </svg>
);

/* ------------------------------------------------------------------ */
/* Application                                                         */
/* ------------------------------------------------------------------ */

const menus = [
  "File", "Dati", "Geometria", "Carichi", "Modello", "Analisi", "Risultati", "Grafica", "Relazione", "Strumenti",
  "Window", "Help",
];

const ToolButton = ({ label, icon, ...rest }) => (
  <Tool type="button" aria-label={label} {...rest}>
    {icon}
  </Tool>
);

export default function App() {
  return (
    <Window>
      <GlobalStyle />
      <TitleBar>
        <AppIcon />
        <TitleText>{"Aztec Informatica * AZTEC FEM GT 12.0 (32-bit) [C:\\AZTEC FEM GT\\01.azf] - [Grafica]"}</TitleText>
        <WindowControls>
          <WindowButton type="button" aria-label="Riduci">
            <Icon s={10} vb="0 0 10 10" crisp><path d="M0 5h10" stroke="#000" /></Icon>
          </WindowButton>
          <WindowButton type="button" aria-label="Ripristina">
            <Icon s={11} vb="0 0 11 11" crisp><path d="M1 3h7v7H1zM3 3V1h7v7H8" stroke="#000" /></Icon>
          </WindowButton>
          <WindowButton type="button" aria-label="Chiudi">
            <Icon s={10} vb="0 0 10 10"><path d="M0 0l10 10M10 0L0 10" stroke="#000" /></Icon>
          </WindowButton>
        </WindowControls>
      </TitleBar>

      <MenuBar aria-label="Menu">
        <AppIcon />
        <MenuList>
          {menus.map((m) => (
            <MenuItem key={m} type="button">{m}</MenuItem>
          ))}
        </MenuList>
        <MdiControls>
          <MdiButton type="button" aria-label="Riduci documento">
            <Icon s={9} vb="0 0 9 9" crisp><path d="M2 7h5" stroke="#667" strokeWidth="2" /></Icon>
          </MdiButton>
          <MdiButton type="button" aria-label="Ripristina documento">
            <Icon s={9} vb="0 0 9 9" crisp><path d="M1 4h5v4H1zM3 3V1h5v4H7" stroke="#667" /></Icon>
          </MdiButton>
          <MdiButton type="button" aria-label="Chiudi documento">
            <Icon s={9} vb="0 0 9 9"><path d="M1 1l7 7M8 1L1 8" stroke="#667" strokeWidth="2" /></Icon>
          </MdiButton>
        </MdiControls>
      </MenuBar>

      <Bar $kind="main">
        <Group>
          <ToolButton label="Nuovo" icon={mainIcons.new} />
          <ToolButton label="Apri" icon={mainIcons.open} />
          <ToolButton label="Salva" icon={mainIcons.save} />
          <ToolButton label="Salva tutto" icon={mainIcons.saveAll} />
          <Divider />
          <ToolButton label="Unità di misura" icon={mainIcons.units} />
          <ToolButton label="Dimensioni area" icon={mainIcons.select} />
          <ToolButton label="Terreni" icon={mainIcons.tree} />
          <ToolButton label="Stratigrafia" icon={mainIcons.strata} />
          <Divider />
          <ToolButton label="Genera mesh" icon={mainIcons.gridGlobe} />
          <ToolButton label="Elimina mesh" icon={mainIcons.gridDelete} />
          <ToolButton label="Opzioni analisi" icon={mainIcons.opz} />
          <ToolButton label="Analisi" icon={mainIcons.run} />
          <ToolButton label="Elimina analisi" icon={mainIcons.stop} />
          <ToolButton label="Relazione" icon={mainIcons.word} />
          <ToolButton label="Aiuto" icon={mainIcons.help} />
          <Divider $gap={2} />
        </Group>
        <Group $space={48}>
          <ToolButton label="Materiali" icon={mainIcons.materials} />
          <ToolButton label="Mesh" icon={mainIcons.mesh} />
          <ToolButton label="Risultati" icon={mainIcons.view} $on />
        </Group>
      </Bar>

      <Bar $kind="phase">
        <Grip />
        <Group>
          <ToolButton label="Dominio" icon={phaseIcons.domain} $w={35} />
          <ToolButton label="Scavo" icon={phaseIcons.slope} $w={35} />
          <ToolButton label="Vincoli" icon={phaseIcons.springs} $w={35} />
          <ToolButton label="Spostamenti" icon={phaseIcons.square} $w={35} />
          <ToolButton label="Griglia" icon={phaseIcons.grid} $w={35} />
          <ToolButton label="Piastre" icon={phaseIcons.beam} $w={35} />
          <ToolButton label="Tensioni" icon={phaseIcons.frame} $w={35} />
          <ToolButton label="Filtrazione" icon={phaseIcons.seepage} $w={35} $h={34} $on />
          <Divider $gap={2} />
        </Group>
        <Group $space={250}>
          <ToolButton label="Fase precedente" icon={<Chevrons />} $w={40} />
          <Readout $w={100}>Fase 1 / 1</Readout>
          <ToolButton label="Fase successiva" icon={<Chevrons right />} $w={34} />
          <Divider />
        </Group>
        <Group $space={19}>
          <Readout $w={170} $color="#800000">Filtrazione</Readout>
        </Group>
      </Bar>

      <Client>
        <Canvas>
          <Plot />
        </Canvas>
        <SideBar>
          <SideGrip />
          <SideTools>
            <ToolButton label="Carico idraulico" icon={sideIcons.head} $w={34} $h={34} />
            <ToolButton label="Linee di carico" icon={sideIcons.headLines} $w={34} $h={34} />
            <ToolButton label="Velocità X" icon={sideIcons.velocityX} $w={34} $h={34} />
            <ToolButton label="Flusso velocità" icon={sideIcons.velocityFlow} $w={34} $h={34} $on />
          </SideTools>
        </SideBar>
      </Client>

      <Bar $kind="bottom">
        <Grip />
        <Group $space={5}>
          <ToolButton label="Zoom" icon={bottomIcons.zoom} $w={36} />
          <ToolButton label="Opzioni zoom" icon={<Caret />} $w={21} />
          <ToolButton label="Indietro" icon={bottomIcons.back} $w={36} />
          <ToolButton label="Viste precedenti" icon={<Caret />} $w={21} />
          <ToolButton label="Sposta" icon={bottomIcons.hand} $w={32} />
          <ToolButton label="Colori" icon={bottomIcons.brush} $w={36} />
          <ToolButton label="Quote" icon={bottomIcons.dimension} $w={36} />
          <ToolButton label="Testo" icon={bottomIcons.text} $w={36} />
          <ToolButton label="Legenda" icon={bottomIcons.legend} $w={36} />
          <ToolButton label="Esporta DXF" icon={bottomIcons.dxf} $w={36} />
          <ToolButton label="Imposta pagina" icon={bottomIcons.pageSetup} $w={36} />
          <ToolButton label="Anteprima" icon={bottomIcons.preview} $w={36} />
          <ToolButton label="Aiuto" icon={bottomIcons.help} $w={36} />
          <Divider $gap={2} />
        </Group>
        <Group $space={95}>
          <Readout $w={200} $deep $font={'11px "DejaVu Sans Condensed", "DejaVu Sans", sans-serif'}>{"X = 19,52  Y = -1,47"}</Readout>
          <Divider $gap={2} />
        </Group>
        <Group $space={96}>
          <ToolButton
            label="Avvia"
            $w={36}
            icon={
              <Icon>
                <circle cx="10" cy="10" r="9" fill="#e4e4e4" stroke="#999" />
                <path d="M6 4v12l11-6z" fill="#9a9a9a" />
              </Icon>
            }
          />
          <ToolButton
            label="Ferma"
            $w={36}
            icon={<Icon><path d="M4 0h12v20H4z" fill="#9c9c9c" /></Icon>}
          />
        </Group>
      </Bar>

      <StatusBar>
        {"Aztec Informatica s.r.l. * Corso Umberto, 43 * 87050 Casole Bruzio (CS)  *  e-mail: aztec@aztec.it  *  WEB: www.aztec.it"}
      </StatusBar>
    </Window>
  );
}
